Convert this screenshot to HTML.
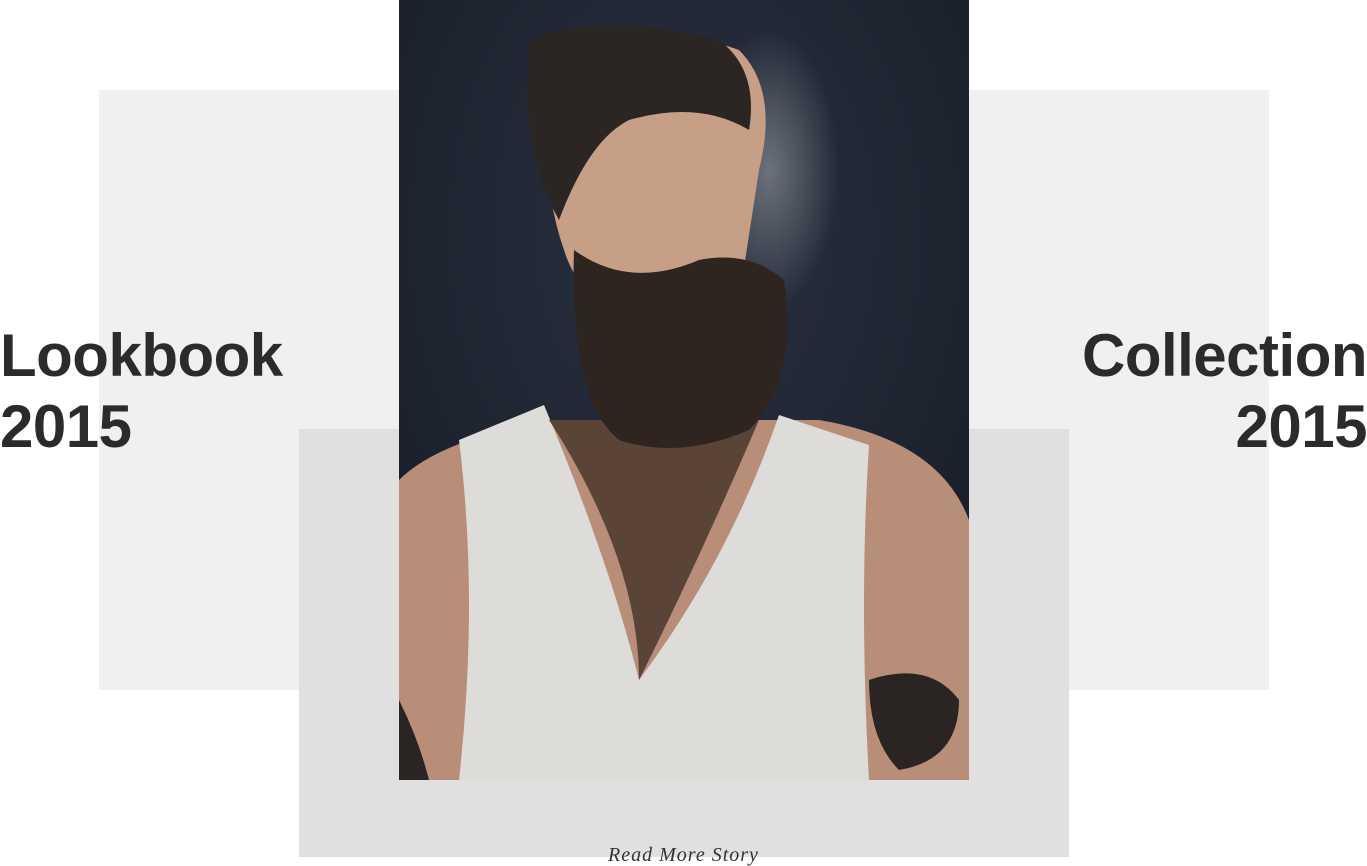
<!DOCTYPE html>
<html><head><meta charset="utf-8"><style>
html,body{margin:0;padding:0;width:1367px;height:866px;overflow:hidden;background:#fff;position:relative}
.r{position:absolute}
.t{position:absolute;font-family:"Liberation Sans",sans-serif;font-weight:bold;font-size:60px;line-height:71px;color:#2b2b2b;letter-spacing:-0.5px}
</style></head><body>
<div class="r" style="left:99px;top:90px;width:1170px;height:600px;background:#f0f0f0"></div>
<div class="r" style="left:299px;top:429px;width:770px;height:428px;background:#e0e0e0"></div>
<div class="t" style="left:0;top:320px">Lookbook<br>2015</div>
<div class="t" style="right:0;top:320px;text-align:right">Collection<br>2015</div>
<svg class="r" style="left:399px;top:0" width="570" height="780" viewBox="0 0 570 780">
<defs>
<radialGradient id="bg" cx="0.5" cy="0.3" r="0.8"><stop offset="0" stop-color="#2a3140"/><stop offset="1" stop-color="#151a24"/></radialGradient>
<radialGradient id="sm" cx="0.5" cy="0.5" r="0.5"><stop offset="0" stop-color="#9aa0a8" stop-opacity="0.6"/><stop offset="1" stop-color="#9aa0a8" stop-opacity="0"/></radialGradient>
</defs>
<rect width="570" height="780" fill="url(#bg)"/>
<ellipse cx="370" cy="170" rx="70" ry="140" fill="url(#sm)"/>
<path d="M0 480 Q40 440 150 420 L420 420 Q540 440 570 520 L570 780 L0 780Z" fill="#b88e78"/>
<path d="M60 440 L145 405 Q210 560 240 680 Q330 560 380 415 L470 445 Q460 600 470 780 L60 780 Q80 600 60 440Z" fill="#dddcd8"/>
<path d="M150 420 Q240 560 240 680 Q300 560 360 420 Z" fill="#5a4438"/>
<path d="M150 70 Q230 10 340 50 Q380 90 360 170 L340 300 Q300 340 240 330 Q180 300 165 250 Q140 180 150 70Z" fill="#c79e86"/>
<path d="M130 40 Q200 10 320 40 Q360 70 350 130 Q300 100 230 120 Q190 140 160 220 Q120 150 130 40Z" fill="#2b2624"/>
<path d="M175 250 Q230 290 300 260 Q350 250 385 280 Q400 380 350 430 Q280 460 220 440 Q170 400 175 250Z" fill="#2e2420"/>
<path d="M0 700 Q20 740 30 780 L0 780Z M470 680 Q530 660 560 700 Q560 760 500 770 Q470 740 470 680Z" fill="#2a2422"/>
</svg>
<div class="r" style="left:0;width:1367px;top:844px;text-align:center;font-family:'Liberation Serif',serif;font-style:italic;font-size:20px;letter-spacing:1px;color:#333">Read More Story</div>
</body></html>
